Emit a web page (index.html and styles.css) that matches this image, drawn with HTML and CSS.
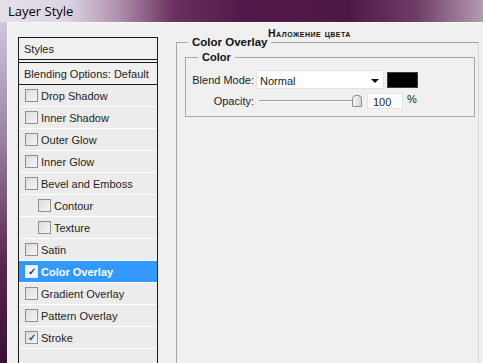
FILE: index.html
```html
<!DOCTYPE html>
<html lang="en">
<head>
    <meta charset="UTF-8">
    <meta name="viewport" content="width=device-width, initial-scale=1.0">
    <title>Layer Style</title>
    <link rel="stylesheet" href="styles.css">
</head>
<body>
    <div class="window">
        <div class="titlebar">Layer Style</div>
        <div class="frame">
            <div class="content">
                <div class="styles-list">
                    <div class="row head">Styles</div>
                    <div class="row blend">Blending Options: Default</div>
                    <div class="row"><span class="check"></span>Drop Shadow</div>
                    <div class="row"><span class="check"></span>Inner Shadow</div>
                    <div class="row"><span class="check"></span>Outer Glow</div>
                    <div class="row"><span class="check"></span>Inner Glow</div>
                    <div class="row"><span class="check"></span>Bevel and Emboss</div>
                    <div class="row sub"><span class="check"></span>Contour</div>
                    <div class="row sub"><span class="check"></span>Texture</div>
                    <div class="row"><span class="check"></span>Satin</div>
                    <div class="row active"><span class="check on">&#10003;</span>Color Overlay</div>
                    <div class="row"><span class="check"></span>Gradient Overlay</div>
                    <div class="row"><span class="check"></span>Pattern Overlay</div>
                    <div class="row"><span class="check on">&#10003;</span>Stroke</div>
                    <div class="row empty"></div>
                </div>

                <div class="settings">
                    <div class="section-title">Наложение цвета</div>
                    <fieldset class="group outer">
                        <legend>Color Overlay</legend>
                        <fieldset class="group inner">
                            <legend>Color</legend>
                            <div class="field">
                                <label>Blend Mode:</label>
                                <div class="select">Normal<span class="arrow"></span></div>
                                <div class="swatch"></div>
                            </div>
                            <div class="field">
                                <label>Opacity:</label>
                                <div class="slider"><span class="track"></span><span class="thumb"></span></div>
                                <div class="num">100</div>
                                <span class="pct">%</span>
                            </div>
                        </fieldset>
                    </fieldset>
                </div>
            </div>
        </div>
    </div>
</body>
</html>
```

FILE: styles.css
```css
body {
    margin: 0;
    overflow: hidden;
    font-family: 'Liberation Sans', Arial, sans-serif;
    font-size: 11px;
    color: #1e1e1e;
    background: #4c1a46;
}
.window {
    width: 483px;
    height: 363px;
    display: flex;
    flex-direction: column;
    overflow: hidden;
}
.titlebar {
    height: 22px;
    flex-shrink: 0;
    line-height: 22px;
    padding-left: 8px;
    font-family: 'Open Sans', 'Liberation Sans', sans-serif;
    font-size: 13px;
    color: #000;
    background: linear-gradient(90deg, #e4e0ea 0%, #dcd4e2 14%, #b294b0 24%, #6a305f 36%, #521a4a 50%, #4e1846 72%, #6e3c66 86%, #b49ab2 100%);
}
.frame {
    flex: 1;
    min-height: 0;
    display: flex;
    padding-left: 7px;
    background: linear-gradient(180deg, #cfc6dc 0%, #9a80a4 35%, #5a2652 70%, #3a1034 100%);
}
.content {
    flex: 1;
    display: flex;
    background: #f0f0f0;
    border-top: 1px solid #fafafa;
    border-left: 1px solid #fafafa;
    padding-left: 10px;
    overflow: hidden;
}
.styles-list {
    width: 140px;
    flex-shrink: 0;
    margin-top: 14px;
    box-sizing: border-box;
    border: 1px solid #1a1a1a;
    border-bottom: none;
    background: #ececec;
}
.row {
    height: 21px;
    display: flex;
    align-items: center;
    padding-left: 6px;
    border-bottom: 1px solid #fff;
    white-space: nowrap;
}
.row.head,
.row.blend {
    padding-left: 5px;
    background: #f0f0f0;
}
.row.head {
    border-bottom: 4px double #1a1a1a;
}
.row.blend {
    border-bottom: 1px solid #1a1a1a;
}
.row.sub {
    padding-left: 19px;
}
.row.active {
    background: #3399ff;
    color: #fff;
    font-weight: bold;
}
.row.empty {
    height: 40px;
    border-bottom: none;
}
.check {
    width: 11px;
    height: 11px;
    margin-right: 3px;
    border: 1px solid #8e8f8f;
    background: linear-gradient(135deg, #dcdcdc, #f6f6f6);
    display: flex;
    align-items: center;
    justify-content: center;
    font-size: 10px;
    font-weight: bold;
    color: #2c4a9c;
    line-height: 1;
}
.row.active .check {
    background: #f4f4f4;
    border-color: #dfe8f4;
    color: #1c3c8c;
}
.settings {
    flex: 1;
    display: flex;
    flex-direction: column;
    padding: 5px 4px 0 18px;
}
.section-title {
    height: 11px;
    line-height: 11px;
    padding-left: 92px;
    font-size: 10.5px;
    font-weight: bold;
    font-variant: small-caps;
    letter-spacing: 0.5px;
    color: #111;
}
.group {
    margin: 0;
    min-width: 0;
    border: 1px solid #a6a6a6;
}
.group legend {
    font-weight: bold;
    line-height: 13px;
    color: #111;
    padding: 0 4px;
}
.outer {
    flex: 1;
    margin-top: -3px;
    padding: 2px 3px 0 8px;
    border-bottom: none;
    border-right-color: #d6d6d6;
}
.outer > legend {
    margin-left: 3px;
    font-size: 11.5px;
}
.inner {
    padding: 0 6px 7px 10px;
}
.inner > legend {
    margin-left: 2px;
}
.field {
    display: flex;
    align-items: center;
    margin-top: 4px;
}
.field:first-of-type {
    margin-top: 6px;
}
.field label {
    width: 58px;
    flex-shrink: 0;
    margin-right: 2px;
    display: flex;
    justify-content: flex-end;
    white-space: nowrap;
}
.select {
    position: relative;
    width: 128px;
    height: 19px;
    box-sizing: border-box;
    border: 1px solid #e2e2e2;
    background: #fff;
    padding: 3px 0 0 3px;
    line-height: 14px;
}
.arrow {
    position: absolute;
    right: 4px;
    top: 8px;
    border-left: 4px solid transparent;
    border-right: 4px solid transparent;
    border-top: 4px solid #111;
}
.swatch {
    width: 31px;
    height: 16px;
    box-sizing: border-box;
    margin-left: 3px;
    background: #000;
    border: 1px solid #3c3c3c;
}
.slider {
    position: relative;
    width: 106px;
    height: 16px;
}
.track {
    position: absolute;
    left: 3px;
    right: 6px;
    top: 7px;
    height: 1px;
    background: #9e9e9e;
    border-bottom: 1px solid #fff;
    border-left: 1px solid #9e9e9e;
}
.thumb {
    position: absolute;
    right: 0;
    top: 2px;
    width: 8px;
    height: 10px;
    border: 1px solid #8a8a8a;
    border-radius: 4px 4px 1px 1px;
    background: linear-gradient(90deg, #f6f6f6, #d8d8d8);
}
.num {
    width: 36px;
    height: 16px;
    box-sizing: border-box;
    margin-left: 5px;
    padding: 2px 0 0 5px;
    line-height: 13px;
    background: #fff;
    border: 1px solid #e6e6e6;
}
.pct {
    margin-left: 4px;
    align-self: flex-start;
    line-height: 13px;
}
```
